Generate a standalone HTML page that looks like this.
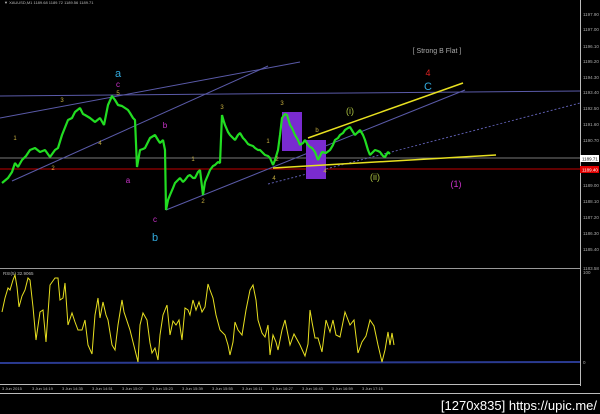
<!DOCTYPE html>
<html><head><style>
html,body{margin:0;padding:0;background:#000;width:600px;height:414px;overflow:hidden}
svg{display:block}
text{font-family:"Liberation Sans",sans-serif}
</style></head><body>
<svg width="600" height="414" viewBox="0 0 600 414" xmlns="http://www.w3.org/2000/svg">
<rect width="600" height="414" fill="#000"/>
<text x="4" y="4" font-size="4" fill="#bbb">▼ XAUUSD,M1  1189.68 1189.72 1189.56 1189.71</text>
<!-- axis -->
<line x1="580.5" y1="0" x2="580.5" y2="386" stroke="#bbb" stroke-width="1"/>
<g font-size="4.5" fill="#aaa">
<text x="583" y="16">1197.90</text><text x="583" y="31">1197.00</text><text x="583" y="48">1196.10</text>
<text x="583" y="63">1195.20</text><text x="583" y="79">1194.30</text><text x="583" y="94">1193.40</text>
<text x="583" y="110">1192.50</text><text x="583" y="126">1191.60</text><text x="583" y="142">1190.70</text>
<text x="583" y="187">1189.00</text><text x="583" y="203">1188.10</text><text x="583" y="219">1187.20</text>
<text x="583" y="235">1186.30</text><text x="583" y="251">1185.40</text>
<text x="583" y="270">1183.58</text><text x="583" y="274">100</text><text x="583" y="364">0</text>
</g>
<rect x="580" y="155" width="19" height="7" fill="#fff"/><text x="582" y="160.5" font-size="4.5" fill="#000">1189.71</text>
<rect x="580" y="166" width="19" height="7" fill="#e00000"/><text x="582" y="171.5" font-size="4.5" fill="#fff">1189.40</text>
<!-- horizontal levels -->
<line x1="0" y1="158" x2="580" y2="158" stroke="#777" stroke-width="1"/>
<line x1="0" y1="169" x2="580" y2="169" stroke="#c00000" stroke-width="1"/>
<line x1="0" y1="96" x2="580" y2="91" stroke="#5a5aa8" stroke-width="1"/>
<!-- trendlines -->
<line x1="0" y1="118" x2="300" y2="62" stroke="#5a5aa8" stroke-width="1"/>
<line x1="12" y1="181" x2="268" y2="66" stroke="#5a5aa8" stroke-width="1"/>
<line x1="166" y1="210" x2="465" y2="90" stroke="#5a5aa8" stroke-width="1"/>
<line x1="268" y1="184" x2="580" y2="103" stroke="#5a5aa8" stroke-width="1" stroke-dasharray="2,2"/>
<!-- purple boxes -->
<rect x="282" y="112" width="20" height="39" fill="#7a2bd0"/>
<rect x="306" y="140" width="20" height="39" fill="#7a2bd0"/>
<!-- price -->
<polyline fill="none" stroke="#22dd22" stroke-width="2.2" stroke-linejoin="bevel" points="2,183 8,178 12,172 15,163 18,167 22,160 26,156 30,150 35,148 40,152 45,150 50,157 55,150 58,148 62,135 66,125 68,120 72,118 75,112 80,108 83,114 85,115 90,118 95,122 100,118 104,125 108,105 112,96 115,100 118,105 122,106 125,108 128,110 130,113 133,118 135,120 137,167 140,150 143,149 145,148 148,142 150,138 155,135 158,140 160,143 163,140 165,150 166,210 168,200 170,195 173,188 175,183 178,180 180,178 183,182 185,180 188,176 190,175 193,178 195,178 198,172 200,170 203,195 205,182 208,175 210,170 213,166 215,165 218,162 220,163 222,115 224,122 225,125 228,132 230,135 233,138 235,140 238,135 240,133 243,138 245,140 248,144 250,145 253,146 255,148 258,150 260,150 263,153 265,155 268,156 270,158 273,165 275,160 278,150 280,135 282,118 285,114 287,115 290,125 292,128 295,135 298,140 300,145 303,143 305,140 308,145 310,147 312,148 315,152 318,160 320,156 322,152 326,153 330,150 333,145 335,140 338,138 340,135 343,133 345,130 348,128 350,127 353,132 355,135 358,132 360,130 363,135 365,140 368,150 370,155 373,152 375,150 378,151 380,152 383,156 385,157 388,152 390,154"/>
<!-- yellow lines -->
<line x1="308" y1="138" x2="463" y2="83" stroke="#e8e020" stroke-width="1.5"/>
<line x1="273" y1="168" x2="496" y2="155" stroke="#e8e020" stroke-width="1.5"/>
<!-- labels -->
<g font-size="11" text-anchor="middle">
<text x="118" y="77" fill="#33aadd">a</text>
<text x="155" y="241" fill="#33aadd">b</text>
<text x="428" y="90" fill="#33aadd">C</text>
<text x="428" y="76" fill="#dd2222" font-size="9">4</text>
</g>
<g font-size="8" text-anchor="middle" fill="#cc33cc">
<text x="118" y="87">c</text><text x="128" y="183">a</text><text x="165" y="128">b</text><text x="155" y="222">c</text>
<text x="456" y="187" font-size="9">(1)</text>
</g>
<g font-size="6" text-anchor="middle" fill="#c8b040">
<text x="118" y="95">5</text><text x="62" y="102">3</text><text x="15" y="140">1</text><text x="53" y="170">2</text>
<text x="100" y="145">4</text><text x="222" y="109">3</text><text x="193" y="161">1</text><text x="203" y="203">2</text>
<text x="282" y="105">3</text><text x="268" y="143">1</text><text x="277" y="161">2</text><text x="274" y="180">4</text>
<text x="317" y="132">b</text><text x="325" y="173">4</text>
</g>
<g font-size="9" text-anchor="middle" fill="#aac040">
<text x="350" y="114">(i)</text><text x="375" y="180">(ii)</text>
</g>
<text x="437" y="53" font-size="7" fill="#aaa" text-anchor="middle">[ Strong B Flat ]</text>
<!-- separator -->
<line x1="0" y1="268.5" x2="580" y2="268.5" stroke="#999" stroke-width="1"/>
<text x="3" y="275" font-size="4.5" fill="#bbb">RSI(5) 32.9065</text>
<line x1="0" y1="363" x2="580" y2="362" stroke="#2a3a90" stroke-width="2"/>
<polyline fill="none" stroke="#e8e020" stroke-width="1" points="2,312 5,298 8,288 10,290 13,280 15,275 17,287 19,307 22,296 25,290 28,278 30,280 33,307 36,340 40,312 43,310 46,342 50,285 55,278 58,278 60,300 63,298 65,283 68,325 72,313 75,322 78,330 82,330 85,320 88,345 92,354 95,315 98,298 100,318 103,302 106,315 108,320 112,345 115,350 118,325 122,300 124,312 130,330 135,350 138,362 140,325 143,313 147,320 150,343 152,353 155,348 158,360 160,335 163,315 167,305 170,335 173,321 176,325 179,320 182,340 185,308 188,310 190,315 193,300 196,310 199,302 202,312 205,307 208,284 210,290 213,298 216,315 220,330 225,335 228,345 230,355 233,342 235,322 238,330 242,335 246,310 250,290 253,285 256,300 258,320 262,333 265,337 268,325 270,355 273,335 276,342 278,350 282,330 285,320 290,345 294,334 300,345 305,356 308,344 310,310 312,322 315,338 318,338 322,352 326,320 330,332 333,320 336,335 340,337 345,312 350,325 354,320 358,353 362,342 366,336 370,320 374,326 378,345 382,362 385,350 388,332 390,345 392,333 394,345"/>
<line x1="0" y1="384.5" x2="580" y2="384.5" stroke="#bbb" stroke-width="1"/>
<g font-size="4" fill="#bbb">
<text x="2" y="390">3 Jun 2015</text><text x="32" y="390">3 Jun 14:19</text><text x="62" y="390">3 Jun 14:35</text>
<text x="92" y="390">3 Jun 14:51</text><text x="122" y="390">3 Jun 15:07</text><text x="152" y="390">3 Jun 15:23</text>
<text x="182" y="390">3 Jun 15:39</text><text x="212" y="390">3 Jun 15:55</text><text x="242" y="390">3 Jun 16:11</text>
<text x="272" y="390">3 Jun 16:27</text><text x="302" y="390">3 Jun 16:43</text><text x="332" y="390">3 Jun 16:59</text>
<text x="362" y="390">3 Jun 17:15</text>
</g>
<line x1="0" y1="393.5" x2="600" y2="393.5" stroke="#bbb" stroke-width="1"/>
<text x="597" y="410" font-size="13" fill="#fff" text-anchor="end" font-family="Liberation Sans Narrow, Liberation Sans, sans-serif">[1270x835] https://upic.me/</text>
</svg>
</body></html>
